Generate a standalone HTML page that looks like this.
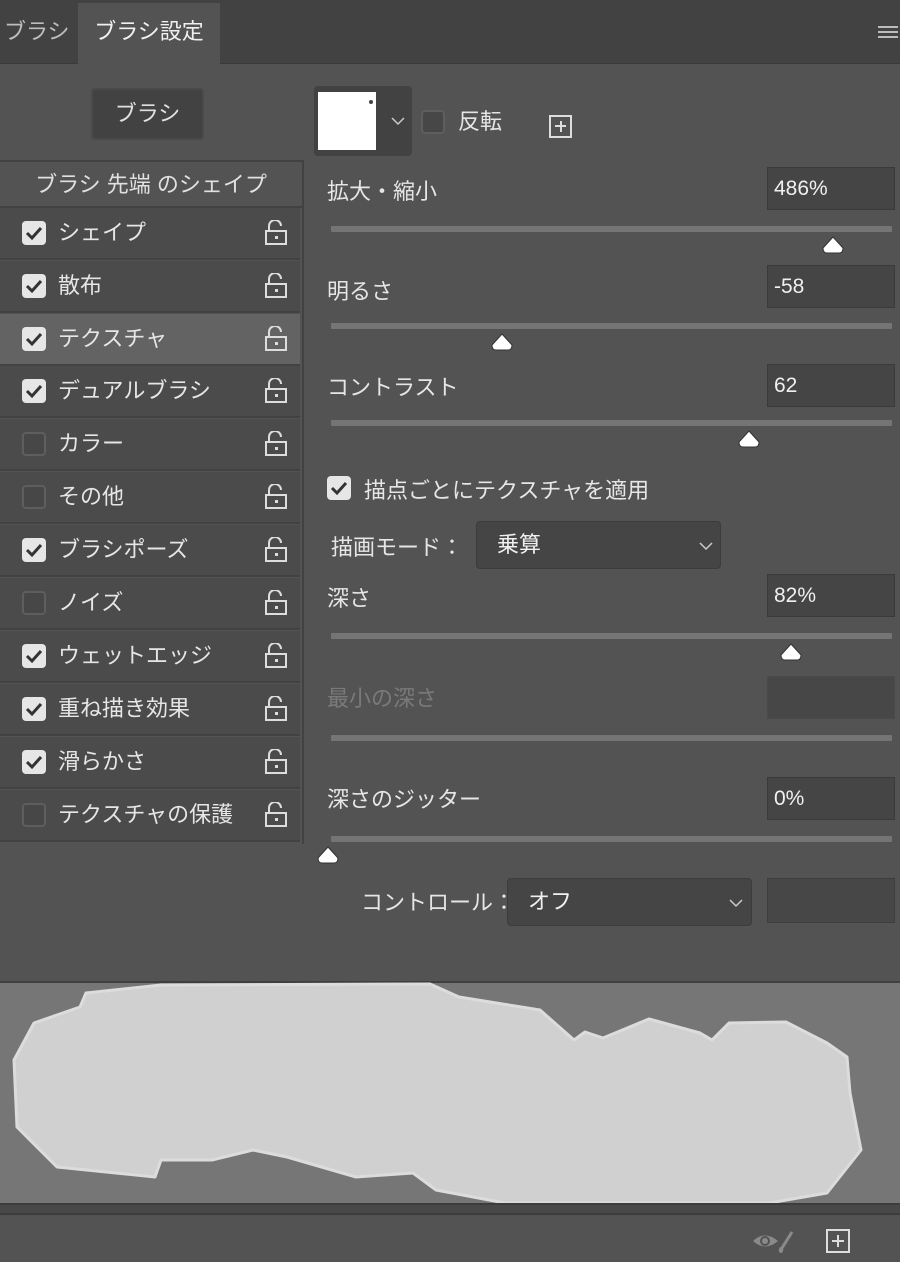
<!DOCTYPE html>
<html><head><meta charset="utf-8"><style>
*{margin:0;padding:0;box-sizing:border-box}
body{width:900px;height:1262px;background:#535353;font-family:"Liberation Sans","Noto Sans CJK JP",sans-serif;color:#e0e0e0;position:relative;overflow:hidden;font-size:22px}
.a{position:absolute}
.tabbar{left:0;top:0;width:900px;height:64px;background:#424242;border-bottom:1px solid #3a3a3a}
.tab{top:3px;height:61px;line-height:58px;font-size:22px}
.row{left:0;width:300px;height:52px;border-bottom:2px solid #424242;background:#4b4b4b}
.row .t{position:absolute;left:58px;top:0;line-height:50px;font-size:22px;color:#e6e6e6}
.cb{position:absolute;width:24px;height:24px;border-radius:4px;background:#e6e6e6}
.cb.off{background:#474747;border:2px solid #5e5e5e}
.cb svg{position:absolute;left:3px;top:4px}
.lock{position:absolute;left:264px;top:12px}
.lbl{font-size:22px;color:#e6e6e6}
.inp{background:#454545;border:1px solid #3a3a3a;width:128px;height:43px;left:767px;font-size:21px;line-height:41px;padding-left:6px;color:#f0f0f0}
.trk{left:331px;width:561px;height:6px;background:#757575;border-radius:1px}
.th{width:24px;height:18px}
.dd{background:#454545;border:1px solid #3c3c3c;border-radius:4px;height:48px;font-size:22px;line-height:46px;padding-left:20px;color:#f0f0f0}
</style></head><body>
<div class="a tabbar"></div>
<div class="a tab" style="left:0;width:76px;color:#bdbdbd;padding-left:4px">ブラシ</div>
<div class="a tab" style="left:78px;width:142px;background:#535353;text-align:center;color:#f0f0f0">ブラシ設定</div>
<div class="a" style="left:878px;top:26px;width:20px;height:2px;background:#bbb;box-shadow:0 5px 0 #bbb,0 10px 0 #bbb"></div>

<div class="a" style="left:91px;top:88px;width:113px;height:52px;background:#424242;border:2px solid #4a4a4a;border-radius:4px;text-align:center;line-height:48px">ブラシ</div>

<div class="a" style="left:314px;top:86px;width:98px;height:70px;background:#424242;border-radius:4px"></div>
<div class="a" style="left:318px;top:92px;width:58px;height:58px;background:#fff"></div>
<div class="a" style="left:369px;top:100px;width:4px;height:4px;background:#444;border-radius:2px"></div>
<svg class="a" style="left:390px;top:116px" width="16" height="10"><path d="M2 2 L8 8 L14 2" stroke="#ccc" stroke-width="1.5" fill="none"/></svg>
<div class="a cb off" style="left:421px;top:110px"></div>
<div class="a lbl" style="left:458px;top:104px">反転</div>
<div class="a" style="left:549px;top:115px;width:23px;height:23px;border:2px solid #ddd"></div>
<div class="a" style="left:555px;top:125px;width:11px;height:2px;background:#ddd"></div>
<div class="a" style="left:559.5px;top:121px;width:2px;height:11px;background:#ddd"></div>

<div class="a" style="left:302px;top:160px;width:2px;height:684px;background:#424242"></div>
<div class="a" style="left:0;top:160px;width:302px;height:48px;border-top:2px solid #424242;border-bottom:2px solid #424242;text-align:center;line-height:46px">ブラシ 先端 のシェイプ</div>

<!-- rows -->
<div class="a row" style="top:208px"><div class="cb" style="left:22px;top:13px"><svg width="18" height="16"><path d="M2 8 L7 13 L16 3" stroke="#333" stroke-width="3" fill="none"/></svg></div><div class="t">シェイプ</div><svg class="lock" width="24" height="26"><path d="M5 11 V6 a6 6 0 0 1 12 0" stroke="#ddd" stroke-width="2" fill="none"/><rect x="2" y="11" width="20" height="13" stroke="#ddd" stroke-width="2" fill="none"/><rect x="11" y="16" width="3" height="3" fill="#ddd"/></svg></div>
<div class="a row" style="top:261px"><div class="cb" style="left:22px;top:13px"><svg width="18" height="16"><path d="M2 8 L7 13 L16 3" stroke="#333" stroke-width="3" fill="none"/></svg></div><div class="t">散布</div><svg class="lock" width="24" height="26"><path d="M5 11 V6 a6 6 0 0 1 12 0" stroke="#ddd" stroke-width="2" fill="none"/><rect x="2" y="11" width="20" height="13" stroke="#ddd" stroke-width="2" fill="none"/><rect x="11" y="16" width="3" height="3" fill="#ddd"/></svg></div>
<div class="a row" style="top:314px;background:#636363"><div class="cb" style="left:22px;top:13px"><svg width="18" height="16"><path d="M2 8 L7 13 L16 3" stroke="#333" stroke-width="3" fill="none"/></svg></div><div class="t">テクスチャ</div><svg class="lock" width="24" height="26"><path d="M5 11 V6 a6 6 0 0 1 12 0" stroke="#ddd" stroke-width="2" fill="none"/><rect x="2" y="11" width="20" height="13" stroke="#ddd" stroke-width="2" fill="none"/><rect x="11" y="16" width="3" height="3" fill="#ddd"/></svg></div>
<div class="a row" style="top:366px"><div class="cb" style="left:22px;top:13px"><svg width="18" height="16"><path d="M2 8 L7 13 L16 3" stroke="#333" stroke-width="3" fill="none"/></svg></div><div class="t">デュアルブラシ</div><svg class="lock" width="24" height="26"><path d="M5 11 V6 a6 6 0 0 1 12 0" stroke="#ddd" stroke-width="2" fill="none"/><rect x="2" y="11" width="20" height="13" stroke="#ddd" stroke-width="2" fill="none"/><rect x="11" y="16" width="3" height="3" fill="#ddd"/></svg></div>
<div class="a row" style="top:419px"><div class="cb off" style="left:22px;top:13px"></div><div class="t">カラー</div><svg class="lock" width="24" height="26"><path d="M5 11 V6 a6 6 0 0 1 12 0" stroke="#ddd" stroke-width="2" fill="none"/><rect x="2" y="11" width="20" height="13" stroke="#ddd" stroke-width="2" fill="none"/><rect x="11" y="16" width="3" height="3" fill="#ddd"/></svg></div>
<div class="a row" style="top:472px"><div class="cb off" style="left:22px;top:13px"></div><div class="t">その他</div><svg class="lock" width="24" height="26"><path d="M5 11 V6 a6 6 0 0 1 12 0" stroke="#ddd" stroke-width="2" fill="none"/><rect x="2" y="11" width="20" height="13" stroke="#ddd" stroke-width="2" fill="none"/><rect x="11" y="16" width="3" height="3" fill="#ddd"/></svg></div>
<div class="a row" style="top:525px"><div class="cb" style="left:22px;top:13px"><svg width="18" height="16"><path d="M2 8 L7 13 L16 3" stroke="#333" stroke-width="3" fill="none"/></svg></div><div class="t">ブラシポーズ</div><svg class="lock" width="24" height="26"><path d="M5 11 V6 a6 6 0 0 1 12 0" stroke="#ddd" stroke-width="2" fill="none"/><rect x="2" y="11" width="20" height="13" stroke="#ddd" stroke-width="2" fill="none"/><rect x="11" y="16" width="3" height="3" fill="#ddd"/></svg></div>
<div class="a row" style="top:578px"><div class="cb off" style="left:22px;top:13px"></div><div class="t">ノイズ</div><svg class="lock" width="24" height="26"><path d="M5 11 V6 a6 6 0 0 1 12 0" stroke="#ddd" stroke-width="2" fill="none"/><rect x="2" y="11" width="20" height="13" stroke="#ddd" stroke-width="2" fill="none"/><rect x="11" y="16" width="3" height="3" fill="#ddd"/></svg></div>
<div class="a row" style="top:631px"><div class="cb" style="left:22px;top:13px"><svg width="18" height="16"><path d="M2 8 L7 13 L16 3" stroke="#333" stroke-width="3" fill="none"/></svg></div><div class="t">ウェットエッジ</div><svg class="lock" width="24" height="26"><path d="M5 11 V6 a6 6 0 0 1 12 0" stroke="#ddd" stroke-width="2" fill="none"/><rect x="2" y="11" width="20" height="13" stroke="#ddd" stroke-width="2" fill="none"/><rect x="11" y="16" width="3" height="3" fill="#ddd"/></svg></div>
<div class="a row" style="top:684px"><div class="cb" style="left:22px;top:13px"><svg width="18" height="16"><path d="M2 8 L7 13 L16 3" stroke="#333" stroke-width="3" fill="none"/></svg></div><div class="t">重ね描き効果</div><svg class="lock" width="24" height="26"><path d="M5 11 V6 a6 6 0 0 1 12 0" stroke="#ddd" stroke-width="2" fill="none"/><rect x="2" y="11" width="20" height="13" stroke="#ddd" stroke-width="2" fill="none"/><rect x="11" y="16" width="3" height="3" fill="#ddd"/></svg></div>
<div class="a row" style="top:737px"><div class="cb" style="left:22px;top:13px"><svg width="18" height="16"><path d="M2 8 L7 13 L16 3" stroke="#333" stroke-width="3" fill="none"/></svg></div><div class="t">滑らかさ</div><svg class="lock" width="24" height="26"><path d="M5 11 V6 a6 6 0 0 1 12 0" stroke="#ddd" stroke-width="2" fill="none"/><rect x="2" y="11" width="20" height="13" stroke="#ddd" stroke-width="2" fill="none"/><rect x="11" y="16" width="3" height="3" fill="#ddd"/></svg></div>
<div class="a row" style="top:790px"><div class="cb off" style="left:22px;top:13px"></div><div class="t">テクスチャの保護</div><svg class="lock" width="24" height="26"><path d="M5 11 V6 a6 6 0 0 1 12 0" stroke="#ddd" stroke-width="2" fill="none"/><rect x="2" y="11" width="20" height="13" stroke="#ddd" stroke-width="2" fill="none"/><rect x="11" y="16" width="3" height="3" fill="#ddd"/></svg></div>

<!-- right controls -->
<div class="a lbl" style="left:327px;top:174px">拡大・縮小</div>
<div class="a inp" style="top:167px">486%</div>
<div class="a trk" style="top:226px"></div>
<svg class="a th" style="left:821px;top:236px" viewBox="0 0 24 18"><path d="M12 1 L22 12 Q22 17 18 17 H6 Q2 17 2 12 Z" fill="#fff" stroke="#333" stroke-width="1"/></svg>

<div class="a lbl" style="left:327px;top:274px">明るさ</div>
<div class="a inp" style="top:265px">-58</div>
<div class="a trk" style="top:323px"></div>
<svg class="a th" style="left:490px;top:333px" viewBox="0 0 24 18"><path d="M12 1 L22 12 Q22 17 18 17 H6 Q2 17 2 12 Z" fill="#fff" stroke="#333" stroke-width="1"/></svg>

<div class="a lbl" style="left:327px;top:370px">コントラスト</div>
<div class="a inp" style="top:364px">62</div>
<div class="a trk" style="top:420px"></div>
<svg class="a th" style="left:737px;top:430px" viewBox="0 0 24 18"><path d="M12 1 L22 12 Q22 17 18 17 H6 Q2 17 2 12 Z" fill="#fff" stroke="#333" stroke-width="1"/></svg>

<div class="a cb" style="left:327px;top:476px"><svg width="18" height="16"><path d="M2 8 L7 13 L16 3" stroke="#333" stroke-width="3" fill="none"/></svg></div>
<div class="a lbl" style="left:364px;top:473px">描点ごとにテクスチャを適用</div>

<div class="a lbl" style="left:331px;top:530px">描画モード：</div>
<div class="a dd" style="left:476px;top:521px;width:245px">乗算</div>
<svg class="a" style="left:698px;top:541px" width="16" height="10"><path d="M2 2 L8 8 L14 2" stroke="#ccc" stroke-width="1.5" fill="none"/></svg>

<div class="a lbl" style="left:327px;top:581px">深さ</div>
<div class="a inp" style="top:574px">82%</div>
<div class="a trk" style="top:633px"></div>
<svg class="a th" style="left:779px;top:643px" viewBox="0 0 24 18"><path d="M12 1 L22 12 Q22 17 18 17 H6 Q2 17 2 12 Z" fill="#fff" stroke="#333" stroke-width="1"/></svg>

<div class="a lbl" style="left:327px;top:681px;color:#7a7a7a">最小の深さ</div>
<div class="a inp" style="top:676px;background:#474747;border-color:#4a4a4a"></div>
<div class="a trk" style="top:735px"></div>

<div class="a lbl" style="left:327px;top:782px">深さのジッター</div>
<div class="a inp" style="top:777px">0%</div>
<div class="a trk" style="top:836px"></div>
<svg class="a th" style="left:316px;top:846px" viewBox="0 0 24 18"><path d="M12 1 L22 12 Q22 17 18 17 H6 Q2 17 2 12 Z" fill="#fff" stroke="#333" stroke-width="1"/></svg>

<div class="a lbl" style="left:361px;top:885px">コントロール：</div>
<div class="a dd" style="left:507px;top:878px;width:245px">オフ</div>
<svg class="a" style="left:728px;top:898px" width="16" height="10"><path d="M2 2 L8 8 L14 2" stroke="#ccc" stroke-width="1.5" fill="none"/></svg>
<div class="a inp" style="top:878px;height:45px;background:#474747;border-color:#3e3e3e"></div>

<!-- preview -->
<div class="a" style="left:0;top:981px;width:900px;height:2px;background:#3f3f3f"></div>
<div class="a" style="left:0;top:983px;width:900px;height:220px;background:#767676"></div>
<svg class="a" style="left:0;top:0" width="900" height="1262"><path d="M86 993 L161 985 L430 984 L459 997 L540 1010 L574 1040 L585 1032 L603 1038 L649 1019 L700 1033 L712 1040 L729 1023 L786 1022 L827 1043 L847 1057 L850 1093 L861 1150 L827 1193 L769 1203 L505 1203 L436 1190 L413 1173 L356 1177 L287 1157 L253 1150 L212 1160 L161 1160 L155 1177 L57 1167 L17 1127 L14 1060 L34 1023 L80 1007 Z" fill="#d0d0d0" stroke="#dcdcdc" stroke-width="3" stroke-linejoin="round"/></svg>
<div class="a" style="left:0;top:1203px;width:900px;height:12px;background:#484848;border-top:2px solid #3c3c3c;border-bottom:2px solid #3c3c3c"></div>

<!-- bottom icons -->
<svg class="a" style="left:750px;top:1228px" width="48" height="28"><path d="M3 13 Q15 2 28 13 Q15 24 3 13 Z" fill="#8a8a8a"/><circle cx="15" cy="13" r="5" fill="#535353"/><circle cx="15" cy="13" r="3" fill="#8a8a8a"/><path d="M42 4 L32 20" stroke="#8a8a8a" stroke-width="3"/><path d="M30 19 Q27 24 31 25 Q34 24 33 20 Z" fill="#8a8a8a"/></svg>
<div class="a" style="left:826px;top:1229px;width:24px;height:24px;border:2px solid #ddd"></div>
<div class="a" style="left:832px;top:1240px;width:12px;height:2px;background:#ddd"></div>
<div class="a" style="left:837px;top:1235px;width:2px;height:12px;background:#ddd"></div>
</body></html>
